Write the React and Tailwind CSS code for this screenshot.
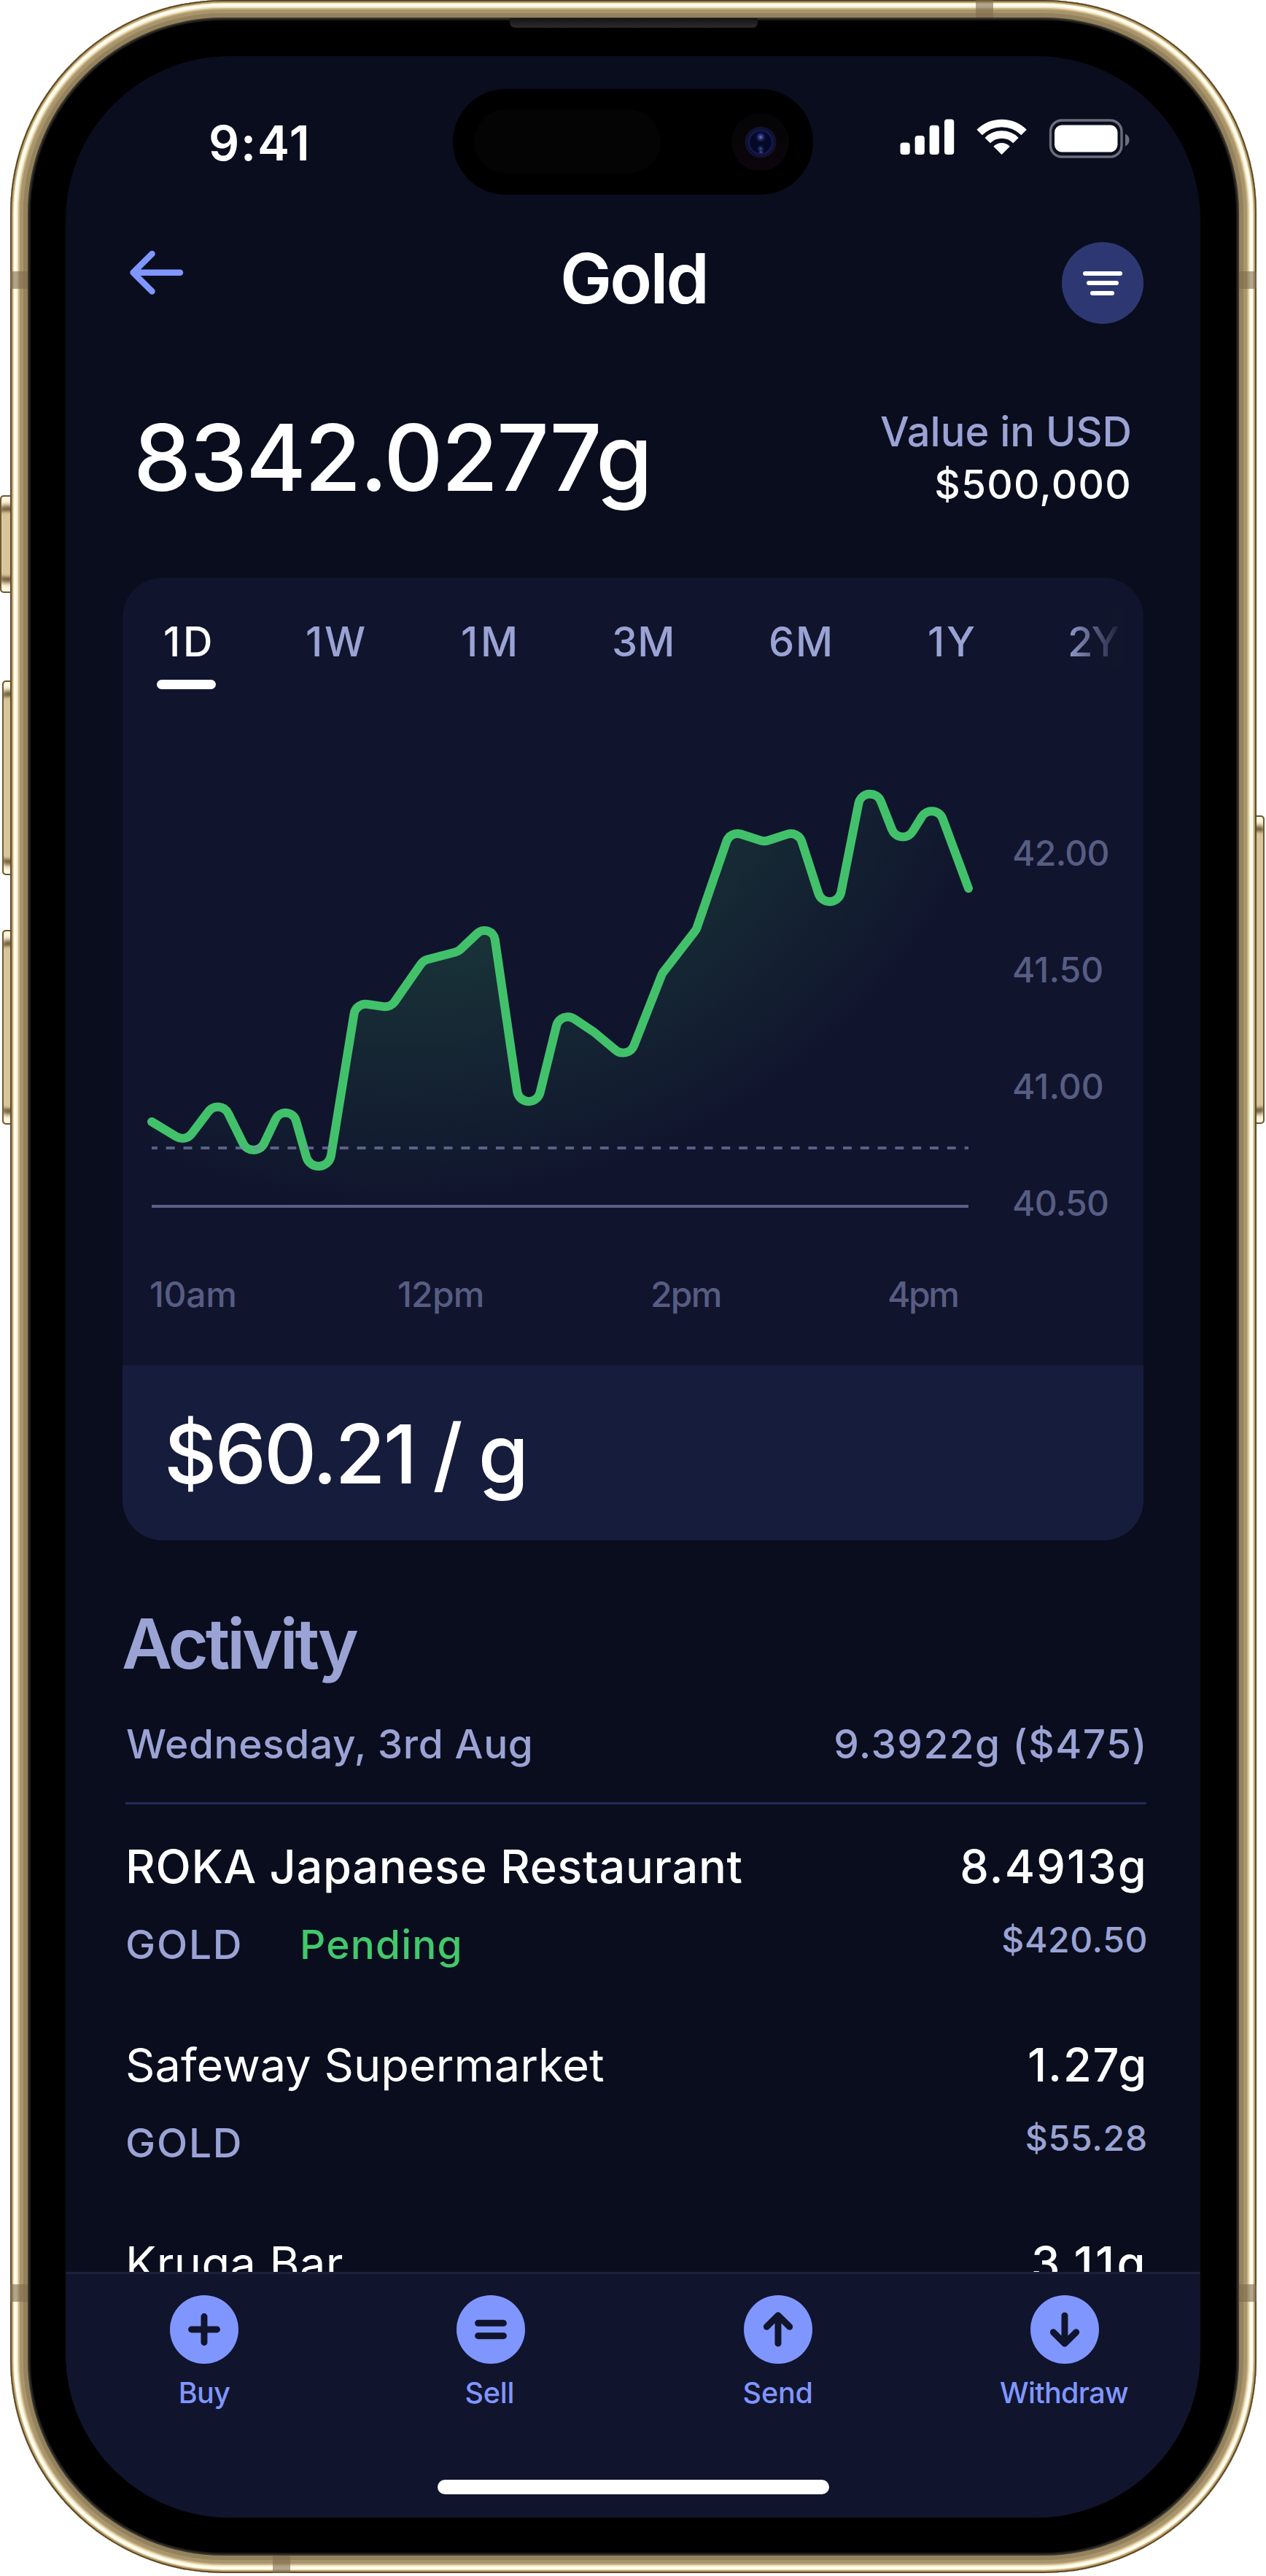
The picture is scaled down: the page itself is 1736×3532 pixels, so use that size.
import React from "react";

/* ---------- chart data: x, y and an optional corner radius ---------- */
const VERTICES = [
  [208, 1538], [254, 1566], [301.5, 1503.5], [348, 1597.5], [395, 1498.5, 15],
  [441.5, 1661, 17.3], [488, 1374.6], [535.5, 1381.6], [580.5, 1317], [628.5, 1304.5],
  [674.7, 1260.6, 14.5], [721, 1577.4], [768.5, 1384.3], [814.7, 1415.2], [861.3, 1454],
  [908, 1335], [954.7, 1274.6], [1001.3, 1139], [1048, 1154], [1094.7, 1139],
  [1141.3, 1284], [1188, 1048], [1234.7, 1167], [1281.3, 1092], [1328, 1218],
];

// Polyline with every corner replaced by an arc.
function roundedPath(pts, defaultRadius) {
  let d = `M${pts[0][0]} ${pts[0][1]}`;
  for (let i = 1; i < pts.length - 1; i++) {
    const [px, py] = pts[i - 1];
    const [x, y, r = defaultRadius] = pts[i];
    const [nx, ny] = pts[i + 1];
    const la = Math.hypot(px - x, py - y);
    const lb = Math.hypot(nx - x, ny - y);
    const ax = (px - x) / la, ay = (py - y) / la;
    const bx = (nx - x) / lb, by = (ny - y) / lb;
    const angle = Math.acos(ax * bx + ay * by);
    const t = r / Math.tan(angle / 2);
    const sweep = ax * by - ay * bx < 0 ? 1 : 0;
    d += ` L${x + ax * t} ${y + ay * t} A${r} ${r} 0 0 ${sweep} ${x + bx * t} ${y + by * t}`;
  }
  const last = pts[pts.length - 1];
  return `${d} L${last[0]} ${last[1]}`;
}

const LINE = roundedPath(VERTICES, 16);
const AREA = `${LINE} L1328 1678 L208 1678 Z`;

const TABS = [
  { label: "1D", cls: "w-[195px] tracking-[3.8px] text-white", active: true },
  { label: "1W", cls: "w-[213px] tracking-[2.8px] text-[#9aa3d4]" },
  { label: "1M", cls: "w-[207px] tracking-[3.8px] text-[#9aa3d4]" },
  { label: "3M", cls: "w-[215px] tracking-[0.2px] text-[#9aa3d4]" },
  { label: "6M", cls: "w-[218px] tracking-[1.8px] text-[#9aa3d4]" },
  { label: "1Y", cls: "w-[192px] tracking-[2.8px] text-[#9aa3d4]" },
  { label: "2Y", cls: "tracking-[-2px] text-[#9aa3d4]" },
];

const ROWS = [
  {
    name: "ROKA Japanese Restaurant", nameCls: "font-medium tracking-[0.72px]",
    grams: "8.4913g", gramsCls: "tracking-[2.1px]",
    usd: "$420.50", usdCls: "tracking-[0.6px]", pending: true,
  },
  {
    name: "Safeway Supermarket", nameCls: "tracking-[0.07px]",
    grams: "1.27g", gramsCls: "tracking-[1.8px]",
    usd: "$55.28", usdCls: "tracking-[0.8px]",
  },
  {
    name: "Kruga Bar", nameCls: "tracking-[0.4px]",
    grams: "3.11g", gramsCls: "tracking-[3.4px]",
  },
];

/* ---------- icons ---------- */
function StatusIcons() {
  return (
    <svg className="h-[54px] w-[316px]" viewBox="1234 163 316 54">
      <g fill="#fff">
        <rect x="1234.5" y="195.5" width="13.2" height="16.5" rx="4" />
        <rect x="1254.6" y="186" width="13.2" height="26" rx="4" />
        <rect x="1274.6" y="171.7" width="13.2" height="40.3" rx="4" />
        <rect x="1295" y="163.5" width="13.2" height="48.5" rx="4" />
        <path d="M1373.6 212 L1362.3 200.7 A16 16 0 0 1 1384.9 200.7 Z" />
        <rect x="1446" y="171.5" width="86.5" height="37" rx="10" />
      </g>
      <g fill="none" stroke="#fff">
        <path strokeWidth="10.5" d="M1354.2 192.6 A27.5 27.5 0 0 1 1393 192.6" />
        <path strokeWidth="10.5" d="M1343.1 181.5 A43.2 43.2 0 0 1 1404.1 181.5" />
      </g>
      <rect x="1440.5" y="165" width="97.5" height="50" rx="15.5" fill="none" stroke="#6c6e7c" strokeWidth="3.4" />
      <path d="M1543 183.5 C1550.5 186.5 1550.5 197.5 1543 200.5 Z" fill="#6c6e7c" />
    </svg>
  );
}

const ACTIONS = [
  { label: "Buy", d: "M29.7 47.2 H64.8 M47.2 29.5 V65", cls: "tracking-[-0.6px]" },
  { label: "Sell", d: "M29.7 38.5 H64.8 M29.7 56 H64.8", cls: "mr-[4px] tracking-[-0.2px]" },
  { label: "Send", d: "M47.2 28 V66.5 M31.5 43.5 L47.2 27.8 L63 43.5", cls: "tracking-[-0.2px]" },
  { label: "Withdraw", d: "M47.2 28 V66.5 M31.5 51 L47.2 66.7 L63 51", cls: "mr-[2px] tracking-[-0.7px]" },
];

/* ---------- screen sections ---------- */
function PriceChart() {
  return (
    <svg className="h-[620px] w-[1172px] shrink-0" viewBox="168 1060 1172 620">
      <defs>
        <radialGradient id="glow" gradientUnits="userSpaceOnUse" cx="0" cy="0" r="1"
          gradientTransform="translate(600 1000) rotate(-12) scale(800 655)">
          <stop offset="0" stopColor="#41c06a" stopOpacity="0.32" />
          <stop offset="0.47" stopColor="#41c06a" stopOpacity="0.17" />
          <stop offset="1" stopColor="#41c06a" stopOpacity="0" />
        </radialGradient>
      </defs>
      <path d={AREA} fill="url(#glow)" />
      <path d="M208 1654 H1328" stroke="#5a6089" strokeWidth="4" />
      <path d={LINE} fill="none" stroke="#42c16b" strokeWidth="12" strokeLinecap="round" strokeLinejoin="round" />
      <path d="M208 1574 H1328" stroke="#8189b6" strokeOpacity="0.65" strokeWidth="4"
        strokeDasharray="11.9 11.9" strokeDashoffset="4" />
    </svg>
  );
}

function PriceCard() {
  return (
    <section className="mt-[99px] ml-[78px] w-[1400px] overflow-hidden rounded-[55px] bg-[#10142d]">
      <div className="relative flex h-[153px] pt-[60px] pl-[56px] text-[56px] leading-none font-[450]">
        {TABS.map((t) => (
          <div key={t.label} className={"shrink-0 " + t.cls}>
            {t.label}
            {t.active && <div className="mt-[24px] -ml-[9px] h-[13px] w-[81px] rounded-full bg-white" />}
          </div>
        ))}
        <div className="absolute top-[36px] left-[1292px] h-[88px] w-[81px] bg-gradient-to-r from-[#12162c]/0 to-[#12162c]" />
      </div>
      <div className="mt-[115px] flex">
        <PriceChart />
        <div className="ml-[48px] flex flex-col gap-[112px] pt-[86px] text-[48px] leading-none font-[450] text-[#575d82]">
          <div className="tracking-[-0.7px]">42.00</div>
          <div className="tracking-[0.1px]">41.50</div>
          <div className="tracking-[0.1px]">41.00</div>
          <div className="tracking-[-0.7px]">40.50</div>
        </div>
      </div>
      <div className="mt-[71px] flex pl-[37px] text-[48px] leading-none font-[450] text-[#575d82]">
        <div className="w-[340px] tracking-[-0.3px]">10am</div>
        <div className="w-[347px] tracking-[-0.8px]">12pm</div>
        <div className="w-[325px] tracking-[-1.8px]">2pm</div>
        <div className="tracking-[-2.4px]">4pm</div>
      </div>
      <div className="mt-[73px] h-[240px] bg-[#161c3b] pt-[65px] pl-[57px] text-[112px] leading-none font-medium tracking-[-2.9px] [word-spacing:-3px]">
        $60.21 / g
      </div>
    </section>
  );
}

function Activity() {
  return (
    <section className="ml-[82px] w-[1402px]">
      <h2 className="mt-[94px] -ml-[5px] text-[95px] leading-none font-semibold tracking-[-4.1px] text-[#9aa3d4]">
        Activity
      </h2>
      <div className="mt-[63px] flex justify-between text-[55px] leading-none font-[450] text-[#9aa3d4]">
        <div className="pl-px tracking-[0.6px]">Wednesday, 3rd Aug</div>
        <div className="tracking-[1.4px]">9.3922g ($475)</div>
      </div>
      <div className="mt-[52px] h-[3px] w-[1400px] bg-[#232a5c]" />
      <div className="pt-[54px]">
        {ROWS.map((r) => (
          <div key={r.name} className="h-[272px]">
            <div className="flex justify-between text-[63px] leading-none text-white">
              <div className={r.nameCls}>{r.name}</div>
              <div className={"font-medium " + r.gramsCls}>{r.grams}</div>
            </div>
            {r.usd && (
              <div className="mt-[45px] flex justify-between leading-none font-[450] text-[#9aa3d4]">
                <div className="flex pt-[3px] text-[55px]">
                  <div className="w-[239px] tracking-[1.8px]">GOLD</div>
                  {r.pending && <div className="tracking-[1.2px] text-[#42c86d]">Pending</div>}
                </div>
                <div className={"text-[48px] " + r.usdCls}>{r.usd}</div>
              </div>
            )}
          </div>
        ))}
      </div>
    </section>
  );
}

function TabBar() {
  return (
    <nav className="h-[337px] shrink-0 border-t-[3px] border-[#1d2138] bg-[#10142d]">
      <div className="flex justify-between pt-[29px] pr-[98px] pl-[102px] text-[39.5px] leading-none font-medium text-[#8096ff]">
        {ACTIONS.map((a) => (
          <div key={a.label} className="flex w-[176px] flex-col items-center">
            <svg className="size-[94px]" viewBox="0 0 94.5 94.5">
              <circle cx="47.25" cy="47.25" r="47.25" fill="#8096ff" />
              <path d={a.d} fill="none" stroke="#10142d" strokeWidth="9" strokeLinecap="round" strokeLinejoin="round" />
            </svg>
            <div className={"mt-[21px] " + a.cls}>{a.label}</div>
          </div>
        ))}
      </div>
      <div className="mt-[98px] ml-[510px] h-[20px] w-[537px] rounded-full bg-white" />
    </nav>
  );
}

function Screen() {
  return (
    <div className="flex h-[3375px] w-[1556px] flex-col overflow-hidden rounded-[225px] bg-[#0a0d1d] text-white">
      <main className="h-[3038px] overflow-hidden">
        <div className="flex h-[255px] items-start justify-between pt-[86px] pr-[96px] pl-[196px]">
          <div className="text-[66px] leading-none font-semibold tracking-[1.9px]">9:41</div>
          <StatusIcons />
        </div>
        <header className="grid h-[112px] grid-cols-3 pr-[78px] pl-[78px]">
          <svg className="mt-[10px] ml-[8px] h-[64px] w-[78px]" viewBox="176 342 78 64" fill="none"
            stroke="#8096ff" strokeWidth="8.5" strokeLinecap="round" strokeLinejoin="round">
            <path d="M208.5 348 L182.5 373.7 L208.5 399.5 M184 373.7 H247" />
          </svg>
          <h1 className="pt-[2px] pl-[2px] text-center text-[95px] leading-none font-semibold tracking-[-2.8px]">Gold</h1>
          <div className="flex size-[112px] flex-col items-center justify-center gap-[7.5px] justify-self-end rounded-full bg-[#2d3873]">
            <div className="h-[6px] w-[54px] rounded-full bg-white" />
            <div className="h-[6px] w-[44px] rounded-full bg-white" />
            <div className="h-[6px] w-[33px] rounded-full bg-white" />
          </div>
        </header>
        <div className="mt-[120px] flex h-[129px] justify-between pr-[94px] pl-[93px] leading-none">
          <div className="text-[126px] font-medium tracking-[-2.05px]">8342.0277g</div>
          <div className="text-right">
            <div className="text-[56px] font-[450] tracking-[0px] text-[#9aa3d4]">Value in USD</div>
            <div className="mt-[17px] text-[55px] font-medium tracking-[1.25px]">$500,000</div>
          </div>
        </div>
        <PriceCard />
        <Activity />
      </main>
      <TabBar />
    </div>
  );
}

/* ---------- device hardware ---------- */
function SideButton({ cls }) {
  return (
    <div className={"absolute rounded-[5px] border-2 border-[#6b5933] bg-[#d9c599] shadow-[inset_0_16px_6px_-4px_#fff6dc,inset_0_-16px_6px_-4px_#fff6dc,inset_0_24px_4px_-4px_#6b5730,inset_0_-24px_4px_-4px_#6b5730] " + cls} />
  );
}

export default function App() {
  return (
    <div className="relative h-[3532px] w-[1736px] overflow-hidden bg-white font-['Inter',sans-serif]">
      <SideButton cls="left-[0px] top-[679px] h-[134px] w-[20px]" />
      <SideButton cls="left-[3px] top-[933px] h-[267px] w-[20px]" />
      <SideButton cls="left-[3px] top-[1275px] h-[267px] w-[20px]" />
      <SideButton cls="left-[1714px] top-[1118px] h-[423px] w-[20px]" />

      <div className="relative ml-[14px] h-[3528px] w-[1709px] overflow-hidden rounded-[292px] bg-black pt-[77px] pl-[76px] shadow-[inset_0_0_0_2px_#5a4a2c,inset_0_0_0_4px_#bfa36c,inset_0_0_0_5px_#efe0b8,inset_0_0_0_9px_#fffdf2,inset_0_0_0_11px_#f1e5c2,inset_0_0_0_13px_#ccb685,inset_0_0_0_18px_#a8956d,inset_0_0_0_24px_#93825c,inset_0_0_0_26px_#3a352c,inset_0_0_0_28px_#1c1c1c]">
        {/* antenna bands */}
        <div className="absolute top-[372px] left-0 h-[24px] w-[24px] bg-[#7d6a4d]/60" />
        <div className="absolute top-[372px] right-0 h-[24px] w-[24px] bg-[#7d6a4d]/60" />
        <div className="absolute top-[3132px] left-0 h-[24px] w-[24px] bg-[#7d6a4d]/60" />
        <div className="absolute top-[3132px] right-0 h-[24px] w-[24px] bg-[#7d6a4d]/60" />
        <div className="absolute top-0 left-[1324px] h-[24px] w-[24px] bg-[#7d6a4d]/60" />
        <div className="absolute bottom-0 left-[360px] h-[24px] w-[24px] bg-[#7d6a4d]/60" />
        {/* earpiece */}
        <div className="absolute top-[25px] left-[685px] h-[13px] w-[340px] rounded-b-[7px] bg-gradient-to-b from-[#141414] to-[#2c2c2c]" />

        <Screen />

        {/* dynamic island */}
        <div className="absolute top-[122px] left-[607px] h-[145px] w-[494px] rounded-full bg-black">
          <div className="absolute top-[28px] left-[29px] h-[88px] w-[256px] rounded-full bg-[#040404]" />
          <div className="absolute top-[33px] right-[33px] flex size-[79px] items-center justify-center rounded-full bg-gradient-to-b from-[#040406] to-[#0d050c]">
            <svg className="size-[44px]" viewBox="0 0 44 44">
              <defs>
                <radialGradient id="lensTop">
                  <stop offset="0" stopColor="#7078d0" />
                  <stop offset="1" stopColor="#1d2170" stopOpacity="0" />
                </radialGradient>
                <radialGradient id="lensLow">
                  <stop offset="0" stopColor="#226a84" />
                  <stop offset="1" stopColor="#0c1048" stopOpacity="0" />
                </radialGradient>
              </defs>
              <circle cx="22" cy="22" r="21.5" fill="#10132c" />
              <circle cx="22" cy="22" r="16" fill="#060828" stroke="#121955" strokeWidth="2.5" />
              <circle cx="22" cy="15" r="7.5" fill="url(#lensTop)" />
              <circle cx="22" cy="31" r="6" fill="url(#lensLow)" />
              <ellipse cx="22.5" cy="35.5" rx="2.6" ry="1.5" fill="#7a2a90" fillOpacity="0.8" />
            </svg>
          </div>
        </div>
      </div>
    </div>
  );
}
